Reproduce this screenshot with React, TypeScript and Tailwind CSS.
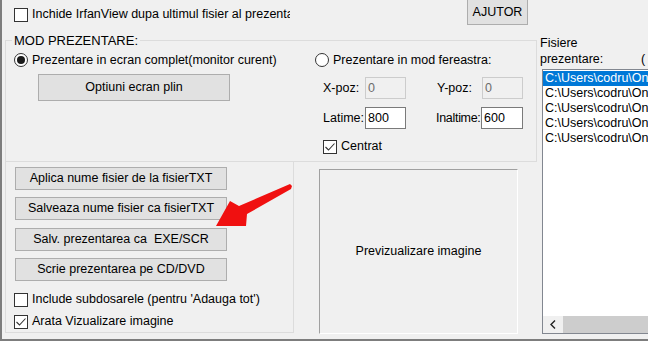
import React from 'react'

const font = "font-['Liberation_Sans',Arial,sans-serif]"

function Check({ checked }: { checked?: boolean }) {
  return (
    <span className="w-[14px] h-[14px] border border-[#333] bg-white shrink-0 flex items-center justify-center">
      {checked && (
        <svg width="12" height="12" viewBox="0 0 12 12">
          <path d="M1.5 6 L4.5 9 L10.5 2.5" fill="none" stroke="#333" strokeWidth="1.1" />
        </svg>
      )}
    </span>
  )
}

function Radio({ on }: { on?: boolean }) {
  return (
    <span className="w-[14px] h-[14px] rounded-full border border-[#333] bg-white shrink-0 flex items-center justify-center">
      {on && <span className="w-[8px] h-[8px] rounded-full bg-[#1a1a1a]" />}
    </span>
  )
}

function Btn({ label, w, h, cls = '' }: { label: string; w: string; h: string; cls?: string }) {
  return (
    <div className={`${w} ${h} ${cls} bg-[#e1e1e1] border border-[#adadad] flex items-center justify-center whitespace-pre`}>
      {label}
    </div>
  )
}

function Field({ value, disabled, w }: { value: string; disabled?: boolean; w: string }) {
  return (
    <div
      className={`${w} h-[22px] border flex items-center pl-[2px] ${
        disabled ? 'bg-[#f0f0f0] border-[#cccccc] text-[#6d6d6d]' : 'bg-white border-[#7a7a7a] text-black'
      }`}
    >
      {value}
    </div>
  )
}

export default function App() {
  const files = Array.from({ length: 5 }, () => 'C:\\Users\\codru\\OneDrive')

  return (
    <div className={`${font} text-[12.5px] leading-[15px] text-black w-[648px] h-[341px] overflow-hidden bg-[#f0f0f0] relative`}>
      <div className="h-[339px] border-l-2 border-[#7d7d7d] flex">
        {/* left part */}
        <div className="w-[535px] shrink-0 flex flex-col">
          {/* top row */}
          <div className="h-[40px] flex items-start">
            <div className="ml-[12px] mt-[7px] w-[276px] overflow-hidden flex items-center gap-[4px] whitespace-nowrap">
              <Check />
              <span>Inchide IrfanView dupa ultimul fisier al prezenta</span>
            </div>
            <Btn label="AJUTOR" w="w-[61px]" h="h-[25px]" cls="ml-[177px] border-t-0" />
          </div>

          {/* MOD PREZENTARE group */}
          <div className="ml-[3px] w-[532px] h-[122px] border border-[#dcdcdc]">
            <div className="-mt-[8px] ml-[6px] px-[2px] w-fit bg-[#f0f0f0] text-[13px]">MOD PREZENTARE:</div>
            <div className="flex mt-[5px]">
              <div className="ml-[8px] w-[301px] flex flex-col">
                <div className="flex items-center gap-[4px] h-[14px] whitespace-nowrap">
                  <Radio on />
                  <span>Prezentare in ecran complet(monitor curent)</span>
                </div>
                <Btn label="Optiuni ecran plin" w="w-[192px]" h="h-[27px]" cls="mt-[7px] ml-[24px]" />
              </div>
              <div className="flex flex-col">
                <div className="flex items-center gap-[4px] h-[14px] whitespace-nowrap">
                  <Radio />
                  <span>Prezentare in mod fereastra:</span>
                </div>
                <div className="flex items-center ml-[8px] mt-[10px]">
                  <span className="w-[42px]">X-poz:</span>
                  <Field value="0" disabled w="w-[41px]" />
                  <span className="ml-[31px] w-[45px]">Y-poz:</span>
                  <Field value="0" disabled w="w-[41px]" />
                </div>
                <div className="flex items-center ml-[8px] mt-[8px]">
                  <span className="w-[42px]">Latime:</span>
                  <Field value="800" w="w-[41px]" />
                  <span className="ml-[30px] w-[45px] whitespace-nowrap tracking-[-0.3px]">Inaltime:</span>
                  <Field value="600" w="w-[42px]" />
                </div>
                <div className="flex items-center gap-[4px] ml-[8px] mt-[10px]">
                  <Check checked />
                  <span>Centrat</span>
                </div>
              </div>
            </div>
          </div>

          {/* bottom part */}
          <div className="flex">
            <div className="ml-[3px] w-[289px] h-[171px] border-l border-r border-b border-[#dcdcdc] flex flex-col">
              <Btn label="Aplica nume fisier de la fisierTXT" w="w-[212px]" h="h-[23px]" cls="ml-[9px] mt-[5px]" />
              <Btn label="Salveaza nume fisier ca fisierTXT" w="w-[212px]" h="h-[23px]" cls="ml-[9px] mt-[7px]" />
              <Btn label="Salv. prezentarea ca  EXE/SCR" w="w-[212px]" h="h-[23px]" cls="ml-[9px] mt-[8px]" />
              <Btn label="Scrie prezentarea pe CD/DVD" w="w-[212px]" h="h-[23px]" cls="ml-[9px] mt-[7px]" />
              <div className="flex items-center gap-[4px] ml-[8px] mt-[11px] whitespace-nowrap">
                <Check />
                <span>Include subdosarele (pentru 'Adauga tot')</span>
              </div>
              <div className="flex items-center gap-[4px] ml-[8px] mt-[7px]">
                <Check checked />
                <span>Arata Vizualizare imagine</span>
              </div>
            </div>
            <div className="ml-[25px] mt-[7px] w-[199px] h-[165px] border border-t-[#a0a0a0] border-l-[#a0a0a0] border-r-white border-b-white flex items-center justify-center">
              Previzualizare imagine
            </div>
          </div>
        </div>

        {/* right part */}
        <div className="flex-1 flex flex-col min-w-0">
          <div className="ml-[3px] mt-[35px] leading-[16px]">
            <div>Fisiere</div>
            <div className="flex whitespace-nowrap">
              <span className="w-[101px]">prezentare:</span>
              <span>(</span>
            </div>
          </div>
          <div className="ml-[5px] mt-[2px] w-[130px] h-[265px] border border-[#828790] bg-white flex flex-col">
            <div className="flex-1 pt-[1px]">
              {files.map((f, i) => (
                <div
                  key={i}
                  className={`h-[15px] pl-[2px] whitespace-nowrap overflow-hidden ${i === 0 ? 'bg-[#0078d7] text-white' : ''}`}
                >
                  {f}
                </div>
              ))}
            </div>
            <div className="h-[17px] bg-[#f0f0f0] flex items-center">
              <span className="w-[20px] flex justify-center">
                <svg width="6" height="9" viewBox="0 0 6 9">
                  <path d="M5 0.5 L1 4.5 L5 8.5" fill="none" stroke="#222" strokeWidth="1.4" />
                </svg>
              </span>
              <span className="flex-1 h-[17px] bg-[#cdcdcd]" />
            </div>
          </div>
        </div>
      </div>
      <div className="h-[2px] bg-[#7d7d7d]" />

      {/* red arrow overlay */}
      <svg className="absolute left-0 top-0 pointer-events-none" width="648" height="341" viewBox="0 0 648 341">
        <polygon
          points="290,184 292,186 291,189 247,214 246,226 216,226 230,201 239,206"
          fill="#f01010"
          strokeLinejoin="round"
        />
      </svg>
    </div>
  )
}
